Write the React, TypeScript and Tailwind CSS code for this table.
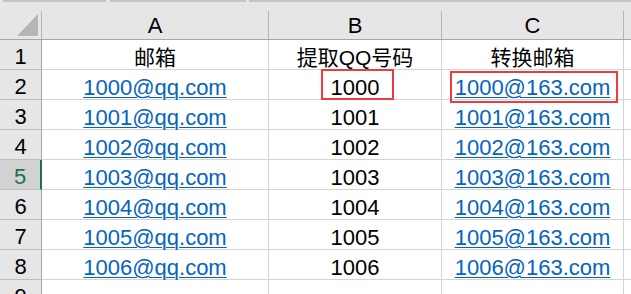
import React from "react";

const rows = [
  { n: 1, a: "邮箱", b: "提取QQ号码", c: "转换邮箱", header: true },
  ...[0, 1, 2, 3, 4, 5, 6].map((i) => ({
    n: i + 2,
    a: `100${i}@qq.com`,
    b: `100${i}`,
    c: `100${i}@163.com`,
    header: false,
  })),
];

const font = "font-['Liberation_Sans','Noto_Sans_CJK_SC',sans-serif]";

export default function App() {
  return (
    <div className={`relative w-[631px] h-[294px] overflow-hidden bg-white ${font} text-black`}>
      {/* top strip */}
      <div className="flex h-[2px] bg-[#e6e6e6]">
        <div className="ml-[3px] w-[103px] bg-[#c4c4c4]" />
        <div className="ml-[4px] w-[136px] bg-[#c4c4c4]" />
        <div className="ml-[3px] flex-1 bg-[#c4c4c4]" />
      </div>
      {/* column headers */}
      <div className="flex h-[38px] bg-[#e6e6e6] border-b border-[#a6a6a6] pt-[9px]">
        <div className="relative w-[42px] shrink-0 border-r border-[#b4b4b4]">
          <div className="absolute left-[17px] top-[3px] w-0 h-0 border-l-[21px] border-l-transparent border-b-[22px] border-b-[#b5b5b5]" />
        </div>
        {[
          ["A", "w-[227px]"],
          ["B", "w-[173px]"],
          ["C", "w-[182px]"],
        ].map(([l, w]) => (
          <div
            key={l}
            className={`${w} shrink-0 border-r border-[#b4b4b4] flex items-center justify-center text-[22px] leading-[25px]`}
          >
            {l}
          </div>
        ))}
        <div className="flex-1" />
      </div>
      {/* body rows */}
      {[...rows, { n: 9, a: "", b: "", c: "", header: false }].map((r) => {
        const sel = r.n === 5;
        return (
          <div key={r.n} className="flex h-[30px]">
            <div
              className={`w-[42px] shrink-0 border-b border-[#bdbdbd] flex items-center justify-center text-[22px] leading-[25px] pt-[4px] ${
                sel
                  ? "bg-[#d2d2d2] border-r-2 border-r-[#217346] text-[#217346]"
                  : "bg-[#e6e6e6] border-r border-r-[#a6a6a6]"
              }`}
            >
              {r.n}
            </div>
            <div className="w-[227px] shrink-0 border-r border-b border-[#d4d4d4] flex items-center justify-center text-[22px] leading-[25px] pt-[5px]">
              {r.header ? (
                <span className="text-[21px]">{r.a}</span>
              ) : (
                <span className="text-[#0563c1] underline decoration-1 underline-offset-[2px]">{r.a}</span>
              )}
            </div>
            <div className="w-[173px] shrink-0 border-r border-b border-[#d4d4d4] flex items-center justify-center text-[22px] leading-[25px] pt-[5px]">
              <span className={r.header ? "text-[21px]" : ""}>{r.b}</span>
            </div>
            <div className="w-[182px] shrink-0 border-r border-b border-[#d4d4d4] flex items-center justify-center text-[22px] leading-[25px] pt-[5px]">
              {r.header ? (
                <span className="text-[21px]">{r.c}</span>
              ) : (
                <span className="text-[#0563c1] underline decoration-1 underline-offset-[2px]">{r.c}</span>
              )}
            </div>
            <div className="flex-1 border-b border-[#d4d4d4]" />
          </div>
        );
      })}
      {/* red highlight boxes */}
      <div className="absolute left-[321px] top-[69px] w-[73px] h-[31px] border-2 border-[#ee3b3b]" />
      <div className="absolute left-[450px] top-[71px] w-[168px] h-[32px] border-2 border-[#ee3b3b]" />
    </div>
  );
}
